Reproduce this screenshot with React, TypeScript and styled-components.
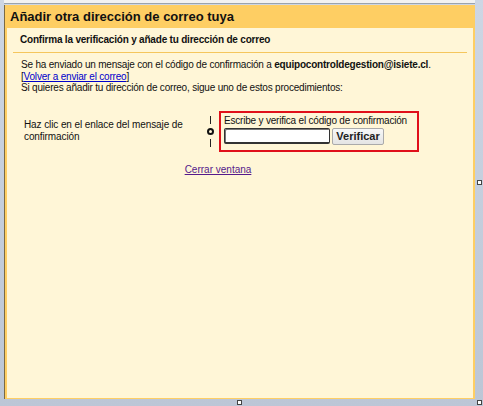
import React from "react";
import styled, { createGlobalStyle } from "styled-components";

const Global = createGlobalStyle`
  html, body { margin: 0; padding: 0; }
  body { font-family: Arial, "Liberation Sans", sans-serif; }
`;

const Screen = styled.div`
  position: relative;
  width: 483px;
  height: 406px;
  overflow: hidden;
  background: linear-gradient(#cdd6e4, #bcc6d6);
  display: flex;
  flex-direction: column;
`;

const TopStrip = styled.div`
  height: 3px;
  background: #f2f2f2;
  border-bottom: 1px solid #9aa3ad;
  margin-left: 4px;
  margin-right: 8px;
  flex: none;
`;

const Frame = styled.div`
  margin: 1px 0 0 4px;
  width: 471px;
  height: 394px;
  border-left: 1px solid #7a6a45;
  background: #fece63;
  display: flex;
  flex-direction: column;
  box-sizing: border-box;
  flex: none;
`;

const Title = styled.h1`
  margin: 0;
  height: 23px;
  line-height: 23px;
  padding-left: 5px;
  font-size: 13px;
  font-weight: bold;
  color: #111;
`;

const Panel = styled.div`
  flex: 1;
  margin: 0 2px 1px 2px;
  background: #fff6d7;
  padding: 0 6px;
  display: flex;
  flex-direction: column;
`;

const SubHead = styled.h2`
  margin: 0;
  padding: 5px 0 6px 7px;
  font-size: 10px;
  letter-spacing: -0.2px;
  font-weight: bold;
  color: #111;
  line-height: 13px;
  border-bottom: 1px solid #f5c65c;
`;

const Body = styled.div`
  padding: 6px 0 0 8px;
  font-size: 10px;
  letter-spacing: -0.2px;
  line-height: 11.5px;
  color: #111;
`;

const Line = styled.div``;

const Link = styled.a<{ $visited?: boolean }>`
  color: ${(p) => (p.$visited ? "#551a8b" : "#0000cc")};
  text-decoration: underline;
  cursor: pointer;
`;

const Options = styled.div`
  display: flex;
  align-items: center;
  margin-top: 17px;
  padding-left: 11px;
`;

const LeftOpt = styled.div`
  width: 172px;
  font-size: 10px;
  letter-spacing: -0.1px;
  line-height: 12px;
  color: #111;
`;

const Sep = styled.div`
  width: 8px;
  margin-left: 10px;
  margin-right: 5px;
  display: flex;
  flex-direction: column;
  align-items: center;
`;

const Bar = styled.div`
  width: 1px;
  height: 8px;
  background: #222;
`;

const Ring = styled.div`
  width: 3px;
  height: 3px;
  border: 2px solid #111;
  border-radius: 50%;
  margin: 4px 0;
`;

const CodeBox = styled.div`
  border: 2px solid #e0101a;
  width: 193px;
  height: 35px;
  padding: 2px 0 0 3px;
  box-sizing: content-box;
`;

const CodeLabel = styled.div`
  font-size: 10px;
  letter-spacing: -0.2px;
  line-height: 12px;
  color: #111;
`;

const CodeRow = styled.div`
  display: flex;
  align-items: center;
  gap: 2px;
  margin-top: 1px;
`;

const CodeInput = styled.input`
  width: 100px;
  height: 13px;
  border: 1px solid #333;
  border-bottom-width: 2px;
  border-radius: 2px;
  box-shadow: inset 1px 1px 0 #777;
  background: #fff;
  padding: 0 2px;
  font-size: 11px;
  outline: none;
`;

const Button = styled.button`
  height: 17px;
  width: 52px;
  padding: 0;
  border: 1px solid #aaa;
  border-radius: 2px;
  background: linear-gradient(#f8f8f8, #e4e4e4);
  font-family: Arial, "Liberation Sans", sans-serif;
  font-size: 11px;
  font-weight: bold;
  color: #222;
`;

const CloseRow = styled.div`
  text-align: center;
  margin-top: 12px;
  padding-right: 44px;
  font-size: 10px;
`;

const Handle = styled.div<{ $x: number; $y: number }>`
  position: absolute;
  left: ${(p) => p.$x}px;
  top: ${(p) => p.$y}px;
  width: 3px;
  height: 3px;
  background: #fff;
  border: 1px solid #444;
`;

export default function App() {
  return (
    <>
      <Global />
      <Screen>
        <TopStrip />
        <Frame>
          <Title>Añadir otra dirección de correo tuya</Title>
          <Panel>
            <SubHead>Confirma la verificación y añade tu dirección de correo</SubHead>
            <Body>
              <Line>
                Se ha enviado un mensaje con el código de confirmación a{" "}
                <b>equipocontroldegestion@isiete.cl</b>.
              </Line>
              <Line>
                [<Link>Volver a enviar el correo</Link>]
              </Line>
              <Line>Si quieres añadir tu dirección de correo, sigue uno de estos procedimientos:</Line>
            </Body>
            <Options>
              <LeftOpt>Haz clic en el enlace del mensaje de confirmación</LeftOpt>
              <Sep>
                <Bar />
                <Ring />
                <Bar />
              </Sep>
              <CodeBox>
                <CodeLabel>Escribe y verifica el código de confirmación</CodeLabel>
                <CodeRow>
                  <CodeInput />
                  <Button>Verificar</Button>
                </CodeRow>
              </CodeBox>
            </Options>
            <CloseRow>
              <Link $visited>Cerrar ventana</Link>
            </CloseRow>
          </Panel>
        </Frame>
        <Handle $x={477} $y={180} />
        <Handle $x={237} $y={400} />
        <Handle $x={477} $y={400} />
      </Screen>
    </>
  );
}
